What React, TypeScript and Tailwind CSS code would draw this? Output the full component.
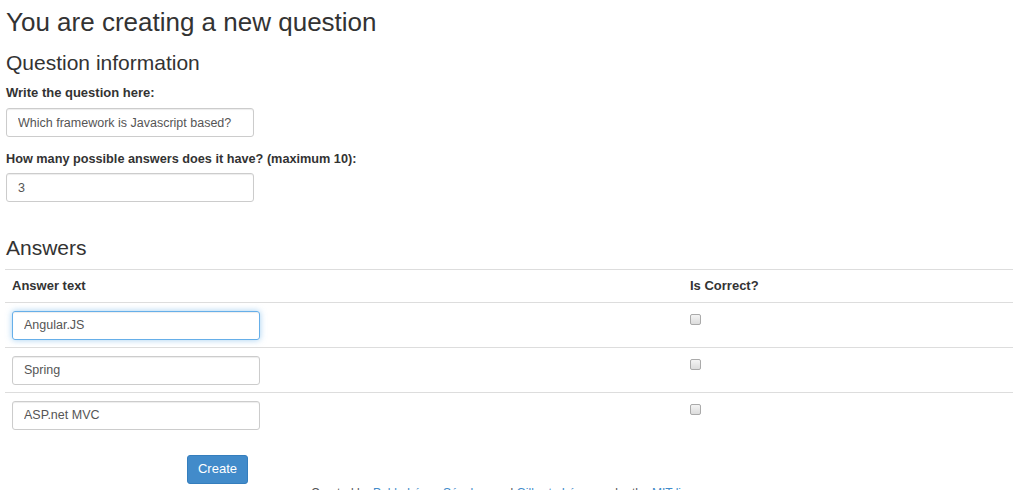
import { useState } from "react";

const answers = ["Angular.JS", "Spring", "ASP.net MVC"];

const inputBase =
  "block h-[29px] w-[248px] rounded-[3px] border px-[11px] text-[12.5px] text-[#555] outline-none";

export default function App() {
  const [question, setQuestion] = useState("Which framework is Javascript based?");
  const [count, setCount] = useState("3");

  return (
    <div className="min-h-[490px] overflow-hidden bg-white px-[6px] text-[12px] text-[#333] font-['Liberation_Sans',Arial,sans-serif]">
      <h1 className="pt-[4px] text-[26px] leading-[36px]">You are creating a new question</h1>
      <h2 className="mt-[10px] text-[21px] leading-[26px]">Question information</h2>

      <div className="mt-[9px]">
        <label className="block text-[13px] font-bold leading-[16px]">Write the question here:</label>
        <input
          value={question}
          onChange={(e) => setQuestion(e.target.value)}
          className={`${inputBase} mt-[7px] h-[28px] w-[247px] border-[#ccc] shadow-[inset_0_1px_1px_rgba(0,0,0,0.075)]`}
        />
      </div>

      <div className="mt-[14px]">
        <label className="block text-[12.7px] font-bold leading-[16px]">
          How many possible answers does it have? (maximum 10):
        </label>
        <input
          value={count}
          onChange={(e) => setCount(e.target.value)}
          className={`${inputBase} mt-[6px] w-[247px] border-[#ccc] shadow-[inset_0_1px_1px_rgba(0,0,0,0.075)]`}
        />
      </div>

      <h2 className="mt-[33px] text-[21px] leading-[26px]">Answers</h2>

      <table className="mt-[8px] w-[1008px] -ml-px border-collapse">
        <thead>
          <tr className="border-t border-[#ddd]">
            <th className="h-[33px] w-[678px] px-[7px] text-left align-middle text-[13px] font-bold">Answer text</th>
            <th className="h-[33px] px-[7px] text-left align-middle text-[13px] font-bold">Is Correct?</th>
          </tr>
        </thead>
        <tbody>
          {answers.map((a, i) => (
            <tr key={a} className="border-t border-[#ddd]">
              <td className="h-[45px] px-[7px] align-middle">
                <input
                  defaultValue={a}
                  className={
                    i === 0
                      ? `${inputBase} border-[#66afe9] shadow-[inset_0_1px_1px_rgba(0,0,0,0.075),0_0_6px_rgba(102,175,233,0.6)]`
                      : `${inputBase} border-[#ccc] shadow-[inset_0_1px_1px_rgba(0,0,0,0.075)]`
                  }
                />
              </td>
              <td className="h-[45px] px-[7px] align-top pt-[11px]">
                <span className="block h-[11px] w-[11px] rounded-[2px] border border-[#aaa] bg-gradient-to-b from-[#f4f4f4] to-[#dcdcdc]" />
              </td>
            </tr>
          ))}
        </tbody>
      </table>

      <div className="mt-[17px] pl-[181px]">
        <button className="h-[29px] w-[61px] rounded-[3px] border border-[#357ebd] bg-[#428bca] text-[13px] text-white">
          Create
        </button>
      </div>

      <p className="mt-[2px] text-center text-[12px] leading-[14px] text-[#555]">
        Created by <a className="text-[#428bca]">Pablo López Sánchez</a> and{" "}
        <a className="text-[#428bca]">Gilberto López</a> under the <a className="text-[#428bca]">MIT license</a>
      </p>
    </div>
  );
}
